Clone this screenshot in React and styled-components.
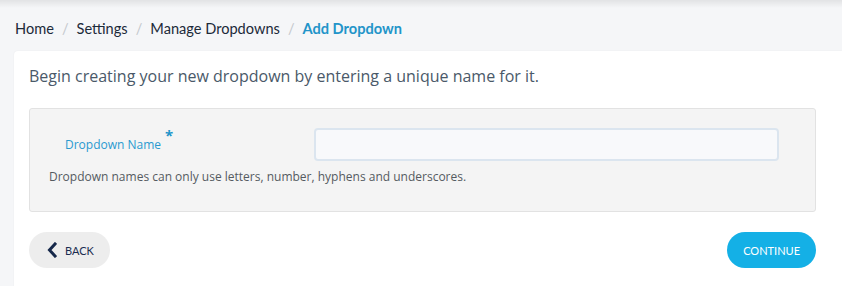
import styled, { createGlobalStyle } from "styled-components"

const GlobalStyle = createGlobalStyle`
    html, body {
        margin: 0;
        padding: 0;
        background: #f5f6f8;
        font-family: "Open Sans", "Liberation Sans", sans-serif;
    }
`

const Page = styled.div`
    position: relative;
    width: 842px;
    height: 286px;
    overflow: hidden;
    background: #f5f6f8;

    &::before {
        content: "";
        position: absolute;
        top: 0;
        left: 0;
        right: 0;
        height: 8px;
        background: linear-gradient(to bottom, rgba(0, 0, 0, 0.08), rgba(0, 0, 0, 0));
    }
`

const Breadcrumbs = styled.nav`
    display: flex;
    align-items: center;
    height: 51px;
    padding: 6px 0 0 15px;
    box-sizing: border-box;
    font-family: "Lato", "Liberation Sans", sans-serif;
    font-size: 14.6px;
    color: #1c2a3a;
`

const Crumb = styled.span`
    color: ${(p) => (p.$active ? "#2294c9" : "#1c2a3a")};
    font-weight: ${(p) => (p.$active ? 700 : 400)};
`

const Divider = styled.span`
    color: #c4c8cd;
    margin: 0 8px;
`

const Card = styled.section`
    margin-left: 14px;
    background: #fff;
    border-radius: 4px 0 0 0;
    box-shadow: 0 0 2px rgba(0, 0, 0, 0.06);
    padding: 14px 26px 18px 15px;
    height: 240px;
    box-sizing: border-box;
`

const Heading = styled.h2`
    margin: 0 0 21px 0;
    font-size: 16px;
    font-weight: 400;
    line-height: 22px;
    color: #4a5969;
`

const Panel = styled.div`
    background: #f4f4f4;
    border: 1px solid #e2e2e2;
    border-radius: 3px;
    padding: 19px 36px 26px 19px;
`

const FieldRow = styled.div`
    display: flex;
    align-items: center;
`

const Label = styled.label`
    width: 265px;
    padding-left: 16px;
    box-sizing: border-box;
    font-size: 12px;
    color: #2a9ad0;
    position: relative;
    top: -4px;
`

const Required = styled.sup`
    color: #2294c9;
    font-size: 15px;
    font-weight: 700;
    margin-left: 4px;
    position: relative;
    top: -3px;
`

const Input = styled.input`
    flex: 1;
    height: 33px;
    box-sizing: border-box;
    border: 2px solid #dbe5ef;
    border-radius: 4px;
    background: #f8f9fb;
    outline: none;
`

const Help = styled.p`
    margin: 7px 0 0 0;
    font-size: 12px;
    line-height: 17px;
    color: #555b61;
`

const Actions = styled.div`
    display: flex;
    justify-content: space-between;
    margin-top: 20px;
`

const Button = styled.button`
    display: flex;
    align-items: center;
    gap: 8px;
    height: 36px;
    border: none;
    border-radius: 18px;
    padding: ${(p) => (p.$primary ? "0 16px" : "0 16px 0 18px")};
    background: ${(p) => (p.$primary ? "#14b0e6" : "#ededed")};
    color: ${(p) => (p.$primary ? "#fff" : "#1a2c50")};
    font-family: "Lato", "Liberation Sans", sans-serif;
    font-size: 11px;
    cursor: pointer;
`

const Chevron = () => (
    <svg width="10" height="16" viewBox="0 0 10 16">
        <path d="M8 2 L2.5 8 L8 14" fill="none" stroke="#16284a" strokeWidth="3" strokeLinecap="square" />
    </svg>
)

export default function App() {
    const crumbs = ["Home", "Settings", "Manage Dropdowns"]

    return (
        <>
            <GlobalStyle />
            <Page>
                <Breadcrumbs>
                    {crumbs.map((c) => (
                        <span key={c}>
                            <Crumb>{c}</Crumb>
                            <Divider>/</Divider>
                        </span>
                    ))}
                    <Crumb $active>Add Dropdown</Crumb>
                </Breadcrumbs>
                <Card>
                    <Heading>Begin creating your new dropdown by entering a unique name for it.</Heading>
                    <Panel>
                        <FieldRow>
                            <Label htmlFor="dropdown-name">
                                Dropdown Name<Required>*</Required>
                            </Label>
                            <Input id="dropdown-name" type="text" />
                        </FieldRow>
                        <Help>Dropdown names can only use letters, number, hyphens and underscores.</Help>
                    </Panel>
                    <Actions>
                        <Button>
                            <Chevron />
                            BACK
                        </Button>
                        <Button $primary>CONTINUE</Button>
                    </Actions>
                </Card>
            </Page>
        </>
    )
}
